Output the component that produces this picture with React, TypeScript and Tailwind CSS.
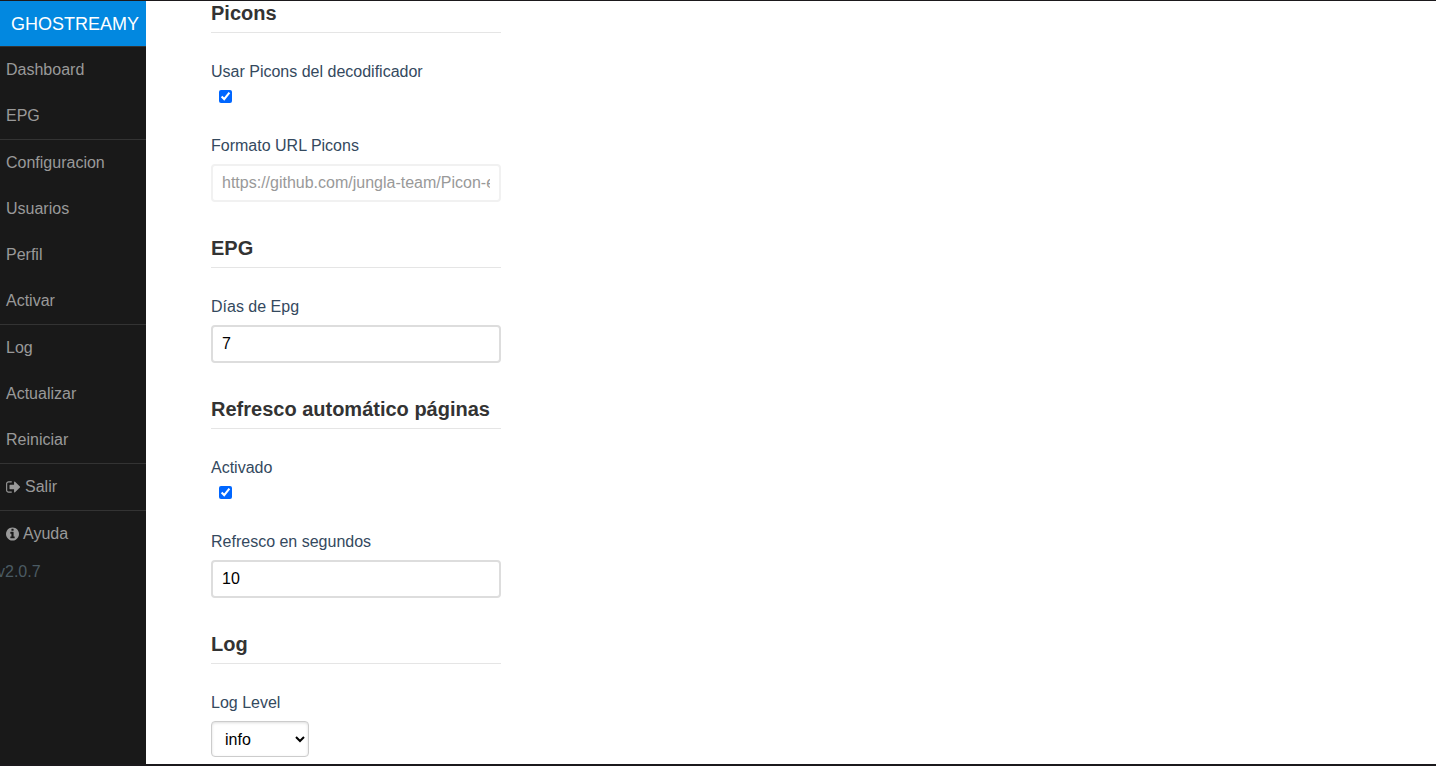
import { useId, type ReactNode } from "react";

function SignOutIcon() {
  return (
    <svg viewBox="0 0 1664 1792" className="h-4 w-[15px] fill-current" aria-hidden="true">
      <path d="M640 1440q0 4 1 20t.5 26.5-3 23.5-10 19.5-20.5 6.5h-320q-119 0-203.5-84.5t-84.5-203.5v-704q0-119 84.5-203.5t203.5-84.5h320q13 0 22.5 9.5t9.5 22.5q0 4 1 20t.5 26.5-3 23.5-10 19.5-20.5 6.5h-320q-66 0-113 47t-47 113v704q0 66 47 113t113 47h312l11.5 1 11.5 3 8 5.5 7 9 2 13.5zm928-544q0 26-19 45l-544 544q-19 19-45 19t-45-19-19-45v-288h-448q-26 0-45-19t-19-45v-384q0-26 19-45t45-19h448v-288q0-26 19-45t45-19 45 19l544 544q19 19 19 45z" />
    </svg>
  );
}

function InfoIcon() {
  return (
    <svg viewBox="128 0 1536 1792" className="h-4 w-[13px] fill-current" aria-hidden="true">
      <path d="M1152 1376v-160q0-14-9-23t-23-9h-96v-512q0-14-9-23t-23-9h-320q-14 0-23 9t-9 23v160q0 14 9 23t23 9h96v320h-96q-14 0-23 9t-9 23v160q0 14 9 23t23 9h448q14 0 23-9t9-23zm-128-896v-160q0-14-9-23t-23-9h-192q-14 0-23 9t-9 23v160q0 14 9 23t23 9h192q14 0 23-9t9-23zm640 416q0 209-103 385.5t-279.5 279.5-385.5 103-385.5-103-279.5-279.5-103-385.5 103-385.5 279.5-279.5 385.5-103 385.5 103 279.5 279.5 103 385.5z" />
    </svg>
  );
}

type MenuItem = { label: string; icon?: ReactNode };

const menuGroups: MenuItem[][] = [
  [{ label: "Dashboard" }, { label: "EPG" }],
  [{ label: "Configuracion" }, { label: "Usuarios" }, { label: "Perfil" }, { label: "Activar" }],
  [{ label: "Log" }, { label: "Actualizar" }, { label: "Reiniciar" }],
  [{ label: "Salir", icon: <SignOutIcon /> }],
  [{ label: "Ayuda", icon: <InfoIcon /> }],
];

function Sidebar() {
  return (
    <nav className="w-[146px] shrink-0 bg-[#191919] text-[#999999]">
      <a
        href="#"
        className="flex h-[45px] items-center justify-end bg-[#0288e0] pt-0.5 pr-[7px] text-[18px] text-white"
      >
        GHOSTREAMY
      </a>
      {menuGroups.map((group) => (
        <ul key={group[0].label} className="border-t border-[#333333]">
          {group.map((item) => (
            <li key={item.label}>
              <a href="#" className="flex h-[46px] items-center gap-1 pl-1.5">
                {item.icon}
                {item.label}
              </a>
            </li>
          ))}
        </ul>
      ))}
      <p className="-ml-[3px] leading-[30px] text-[#4b5b63]">v2.0.7</p>
    </nav>
  );
}

function Section({ title, children }: { title: string; children: ReactNode }) {
  return (
    <section>
      <h2 className="mb-[27px] border-b border-[#e5e5e5] pb-[7px] text-[20px] leading-6 font-bold text-[#333333]">
        {title}
      </h2>
      <div className="flex flex-col gap-[31px]">{children}</div>
    </section>
  );
}

function Field({ label, children }: { label: string; children: (id: string) => ReactNode }) {
  const id = useId();
  return (
    <div className="flex flex-col items-start gap-1.5">
      <label htmlFor={id} className="leading-6 text-[#34495e]">
        {label}
      </label>
      {children(id)}
    </div>
  );
}

const inputClass =
  "h-[38px] w-full rounded-[4px] border-2 border-[#dddddd] bg-white px-[9px] text-black disabled:border-[#f1f1f1] disabled:text-[#999999]";

export default function App() {
  return (
    <div className="flex min-h-screen border-t border-b-2 border-[#1b191c] bg-white font-['Liberation_Sans',Arial,sans-serif] text-base">
      <Sidebar />
      <main className="min-w-0 flex-1 pr-4 pb-1 pl-[65px]">
        <form className="flex max-w-[290px] flex-col gap-[34px]">
          <Section title="Picons">
            <Field label="Usar Picons del decodificador">
              {(id) => (
                <input id={id} type="checkbox" defaultChecked className="ml-2 size-[13px] accent-[#0066ff]" />
              )}
            </Field>
            <Field label="Formato URL Picons">
              {(id) => (
                <input
                  id={id}
                  type="text"
                  disabled
                  defaultValue="https://github.com/jungla-team/Picon-enigma2"
                  className={inputClass}
                />
              )}
            </Field>
          </Section>
          <Section title="EPG">
            <Field label="Días de Epg">
              {(id) => <input id={id} type="number" defaultValue={7} className={inputClass} />}
            </Field>
          </Section>
          <Section title="Refresco automático páginas">
            <Field label="Activado">
              {(id) => (
                <input id={id} type="checkbox" defaultChecked className="ml-2 size-[13px] accent-[#0066ff]" />
              )}
            </Field>
            <Field label="Refresco en segundos">
              {(id) => <input id={id} type="number" defaultValue={10} className={inputClass} />}
            </Field>
          </Section>
          <Section title="Log">
            <Field label="Log Level">
              {(id) => (
                <select
                  id={id}
                  defaultValue="info"
                  className="h-9 w-[98px] rounded-[4px] border border-[#cccccc] bg-white pl-[9px] text-black shadow-[inset_0_1px_3px_#dddddd]"
                >
                  <option>debug</option>
                  <option>info</option>
                  <option>warning</option>
                  <option>error</option>
                </select>
              )}
            </Field>
          </Section>
        </form>
      </main>
    </div>
  );
}
